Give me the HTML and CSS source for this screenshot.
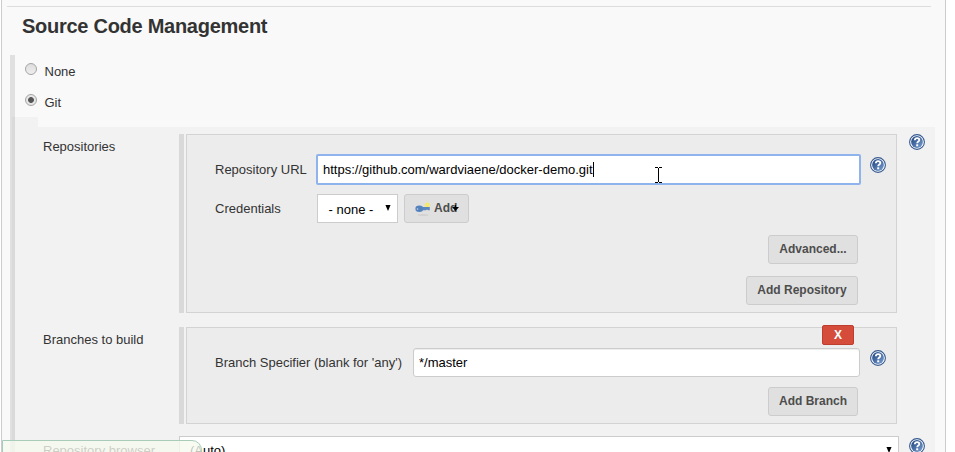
FILE: index.html
```html
<!DOCTYPE html>
<html lang="en">
<head>
<meta charset="utf-8">
<title>Source Code Management</title>
<link rel="stylesheet" href="styles.css">
</head>
<body>
<svg width="0" height="0" class="defs">
  <defs>
    <linearGradient id="blue" x1="0" y1="0" x2="1" y2="1">
      <stop offset="0" stop-color="#1d427f"/><stop offset="1" stop-color="#7ba0d2"/>
    </linearGradient>
    <symbol id="help" viewBox="0 0 16 16">
      <circle cx="8" cy="8" r="7.4" fill="#fff" stroke="#35598f" stroke-width="1.100"/>
      <circle cx="8" cy="8" r="5.900" fill="url(#blue)"/>
      <path d="M5.800 6.300C5.900 4.700 6.800 4.100 8.100 4.100c1.300 0 2.200.7 2.200 1.800 0 1.600-2.100 1.600-2.100 3.300" fill="none" stroke="#fff" stroke-width="1.800"/>
      <rect x="7.200" y="10.300" width="2" height="2" fill="#fff"/>
    </symbol>
  </defs>
</svg>
<main class="frame">
  <hr class="rule">
  <h1 class="title">Source Code Management</h1>
  <section class="scm">
    <label class="choice"><span class="radio"></span><span class="choice-name">None</span></label>
    <label class="choice"><span class="radio checked"></span><span class="choice-name">Git</span></label>
    <div class="panel">
      <div class="notch"></div>
      <div class="panel-body">
        <div class="entry">
          <div class="entry-label">Repositories</div>
          <div class="repeat">
            <div class="box repos">
              <div class="line url-line">
                <span class="name">Repository URL</span>
                <div class="input focused"><span>https://github.com/wardviaene/docker-demo.git</span><i class="caret"></i></div>
                <svg class="help"><use href="#help"/></svg>
              </div>
              <div class="line cred-line">
                <span class="name">Credentials</span>
                <div class="select small"><span>- none -</span><svg class="arrow" viewBox="0 0 6 7"><path d="M0 0h6L3 7z"/></svg></div>
                <div class="button add">
                  <svg class="key" viewBox="0 0 16 16">
                    <ellipse cx="8" cy="14" rx="5.500" ry="1" fill="#d2d2d2"/>
                    <circle cx="12.300" cy="4" r="2.500" fill="#f5e96b"/>
                    <path d="M5 6.100h9.800v3.200H13l-1-.7-1 .7H5z" fill="#5b87bd"/>
                    <ellipse cx="4.300" cy="7.800" rx="3.900" ry="3.300" fill="#5482bd"/>
                    <circle cx="2.500" cy="8" r=".8" fill="#c2d4ea"/>
                  </svg><span>Add</span>
                  <svg class="menu-mark" viewBox="0 0 7 7"><path d="M0 2h7L3.500 6z"/><path d="M3 0h1v4H3z"/></svg>
                </div>
              </div>
              <div class="actions"><div class="button advanced">Advanced...</div></div>
              <div class="actions second"><div class="button add-repo">Add Repository</div></div>
            </div>
          </div>
          <svg class="help outer"><use href="#help"/></svg>
        </div>
        <div class="entry branches">
          <div class="entry-label">Branches to build</div>
          <div class="repeat">
            <div class="box branch">
              <div class="delete">X</div>
              <div class="line branch-line">
                <span class="name wide">Branch Specifier (blank for 'any')</span>
                <div class="input"><span>*/master</span></div>
                <svg class="help"><use href="#help"/></svg>
              </div>
              <div class="actions"><div class="button add-branch">Add Branch</div></div>
            </div>
          </div>
        </div>
        <div class="entry browser">
          <div class="entry-label">Repository browser</div>
          <div class="select full"><span>(Auto)</span><svg class="arrow" viewBox="0 0 6 7"><path d="M0 0h6L3 7z"/></svg></div>
          <svg class="help outer"><use href="#help"/></svg>
        </div>
      </div>
    </div>
  </section>
</main>
<div class="status"></div>
<svg class="cursor" viewBox="0 0 7 16"><path d="M0 .5h3M4 .5h3M3.500 1v14M0 15.500h3M4 15.500h3" stroke="#000" fill="none"/></svg>
</body>
</html>
```
FILE: styles.css
```css
* { box-sizing: border-box; }
html, body { height: 100%; }
body {
  margin: 0;
  overflow: hidden;
  position: relative;
  background: #fff;
  color: #333;
  font: 13px/16px "Liberation Sans", Arial, sans-serif;
}
svg { display: block; flex: none; }
.defs { position: absolute; }
.frame {
  width: 945px;
  height: 452px;
  margin-left: 1px;
  overflow: hidden;
  background: #f9f9f9;
  border: solid #ccc;
  border-width: 0 1px;
}
.rule { margin: 6px 14px 0 5px; border: 0; height: 1px; background: #ddd; }
.title {
  margin: 7px 0 0 20px;
  height: 41px;
  font-size: 20px;
  line-height: 24px;
  letter-spacing: -.27px;
  white-space: nowrap;
}
.scm { margin-left: 8px; border-left: 5px solid #e0e0e0; height: 420px; }
.choice { display: flex; height: 31px; padding: 8px 0 0 10px; }
.radio {
  width: 12px;
  height: 12px;
  border: 1px solid #a5a5a5;
  border-radius: 50%;
  background: linear-gradient(#ddd, #eee);
}
.checked { background: radial-gradient(circle, #555 0 2.5px, #e6e6e6 3.3px); }
.choice-name { margin: 1px 0 0 7.5px; }
.panel { width: 923px; margin-left: -3px; }
.notch { width: 26px; height: 10px; background: rgba(0, 0, 0, .028); }
.panel-body { height: 340px; padding-top: 7px; background: rgba(0, 0, 0, .028); }
.entry { display: flex; }
.entry-label { width: 167px; padding: 5px 0 0 31px; white-space: nowrap; }
.repeat { width: 718px; padding-left: 2px; border-left: 5px solid #d9d9d9; }
.box { background: #ececec; border: 1px solid #d3d3d3; }
.repos { height: 179px; padding-top: 19px; }
.line { display: flex; padding-left: 28px; }
.url-line { height: 40px; }
.name { width: 102px; flex: none; padding-top: 7px; white-space: nowrap; }
.url-line .name { width: 101px; padding-top: 8px; }
.input {
  width: 543px;
  height: 30px;
  padding: 0 5px;
  display: flex;
  align-items: center;
  background: #fff;
  border: 1px solid #ccc;
  border-radius: 3px;
  box-shadow: inset 0 1px 1px rgba(0, 0, 0, .075);
  color: #000;
}
.branch-line .input { height: 29px; }
.focused {
  width: 545px;
  height: 31px;
  border: 2px solid #8fb3ec;
  border-radius: 2px;
  box-shadow: none;
}
.caret { width: 1px; height: 15px; background: #000; }
.help { width: 16px; height: 16px; margin: 3px 0 0 10px; }
.url-line .help { margin-left: 9px; }
.outer { margin: 0 0 0 12px; }
.select {
  display: flex;
  justify-content: space-between;
  background: #fff;
  border: 1px solid #ccc;
  color: #000;
}
.small { width: 81px; height: 29px; padding: 7px 6px 0 10.5px; }
.small .arrow { margin-top: 3px; }
.arrow { width: 6px; height: 6px; }
.button {
  height: 29px;
  padding-bottom: 1px;
  display: flex;
  align-items: center;
  justify-content: center;
  background: #e0e0e0;
  border: 1px solid #ccc;
  border-radius: 3px;
  color: #4d4d4d;
  font-weight: bold;
  font-size: 12px;
  white-space: nowrap;
}
.add { width: 65px; margin-left: 6px; padding-left: 10px; justify-content: flex-start; position: relative; }
.key { width: 16px; height: 16px; margin: 2px 3px 0 0; }
.menu-mark { position: absolute; left: 47px; top: 10px; width: 7px; height: 7px; }
.actions { display: flex; justify-content: flex-end; padding-right: 38px; }
.cred-line { height: 41px; }
.second { margin-top: 12px; }
.advanced, .add-branch { width: 90px; }
.add-repo { width: 112px; }
.branches { margin-top: 14px; }
.branch { height: 97px; position: relative; padding-top: 20px; }
.branch-line { height: 39px; }
.wide { width: 198px; }
.branch-line .input { width: 447px; }
.branch-line .help { margin-top: 2px; }
.delete {
  position: absolute;
  right: 42px;
  top: -3px;
  width: 32px;
  height: 20px;
  background: #d54c3a;
  border: 1px solid #bd3e2e;
  border-radius: 2px;
  color: #fff;
  font-weight: bold;
  font-size: 12px;
  line-height: 18px;
  text-align: center;
}
.browser { margin-top: 12px; }
.browser .entry-label { padding-top: 7px; }
.full { width: 720px; height: 29px; padding: 6px 6px 0 10px; }
.full .arrow { margin-top: 4px; }
.browser .outer { margin: 2px 0 0 10px; }
.status {
  position: absolute;
  left: 2px;
  top: 440px;
  width: 200px;
  height: 24px;
  background: rgba(246, 250, 238, .78);
  border: 1px solid #a7ccb9;
  border-radius: 0 10px 0 0;
}
.cursor { position: absolute; left: 655px; top: 167px; width: 7px; height: 16px; }
```
